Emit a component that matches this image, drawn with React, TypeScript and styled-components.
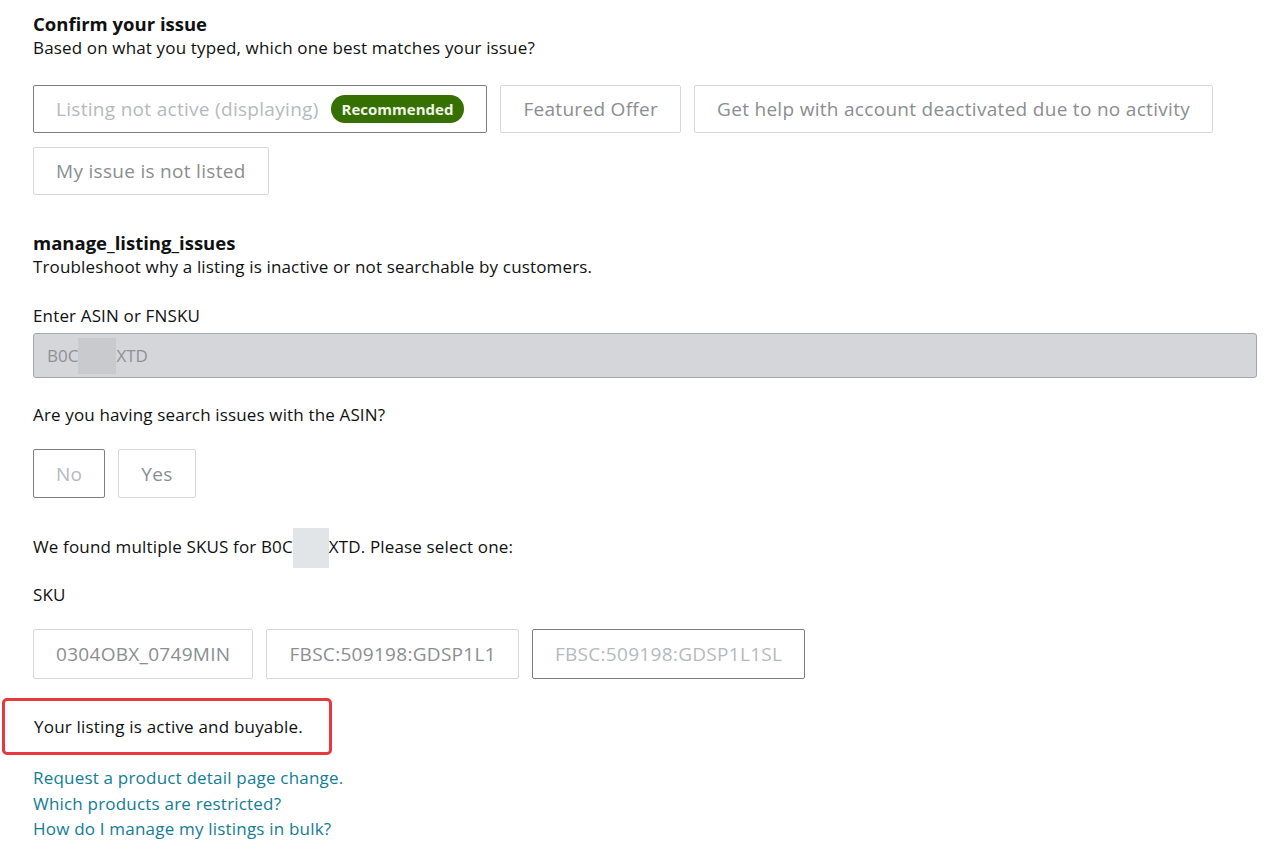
import React from 'react';
import styled, { createGlobalStyle } from 'styled-components';

const GlobalStyle = createGlobalStyle`
  html, body {
    margin: 0;
    padding: 0;
    background: #ffffff;
  }

  body {
    font-family: 'Open Sans', 'Liberation Sans', Arial, sans-serif;
    color: #0f1111;
  }
`;

const Page = styled.div`
  display: flex;
  flex-direction: column;
  padding: 12px 19px 20px 33px;
  width: 1276px;
  box-sizing: border-box;
`;

const Heading = styled.div<{ $top?: number }>`
  margin-top: ${(p) => p.$top ?? 0}px;
  font-size: 18.5px;
  font-weight: 700;
  line-height: 24px;
  color: #0f1111;
`;

const Text = styled.div<{ $top?: number }>`
  margin-top: ${(p) => p.$top ?? 0}px;
  font-size: 17px;
  letter-spacing: 0.15px;
  line-height: 24px;
  color: #0f1111;
`;

const ChoiceRow = styled.div<{ $top?: number }>`
  display: flex;
  flex-wrap: wrap;
  gap: 14px 13px;
  margin-top: ${(p) => p.$top ?? 0}px;
  max-width: 1190px;
`;

const Choice = styled.button<{ $selected?: boolean; $height?: number }>`
  display: inline-flex;
  align-items: center;
  gap: 12px;
  height: ${(p) => p.$height ?? 48}px;
  padding: 0 22px;
  box-sizing: border-box;
  background: #ffffff;
  border: 1px solid ${(p) => (p.$selected ? '#7b7f82' : '#d5d9d9')};
  border-radius: 2px;
  font-family: inherit;
  font-size: 19px;
  letter-spacing: 0.3px;
  color: ${(p) => (p.$selected ? '#b3babd' : '#8a8e92')};
  cursor: pointer;
`;

const Badge = styled.span`
  display: inline-flex;
  align-items: center;
  height: 28px;
  padding: 0 11px;
  border-radius: 14px;
  background: #357000;
  color: #f2f6ea;
  font-size: 15px;
  font-weight: 700;
  letter-spacing: 0;
`;

const InputBox = styled.div`
  display: flex;
  align-items: center;
  margin-top: 5px;
  height: 45px;
  padding: 0 13px;
  box-sizing: border-box;
  background: #d5d6d9;
  border: 1px solid #a3a6aa;
  border-radius: 3px;
  font-size: 17px;
  color: #8e9195;
`;

const Redact = styled.span<{ $bg: string; $w: number; $h: number }>`
  display: inline-block;
  width: ${(p) => p.$w}px;
  height: ${(p) => p.$h}px;
  margin: -8px 0;
  background: ${(p) => p.$bg};
  vertical-align: middle;
`;

const Notice = styled.div`
  display: flex;
  align-items: center;
  margin: 19px 0 0 -31px;
  width: 330px;
  height: 57px;
  padding-left: 29px;
  box-sizing: border-box;
  border: 3px solid #e8383d;
  border-radius: 5px;
  font-size: 17px;
  letter-spacing: 0.2px;
  color: #0f1111;
`;

const Links = styled.div`
  display: flex;
  flex-direction: column;
  margin-top: 10px;
`;

const HelpLink = styled.a`
  font-size: 17px;
  letter-spacing: 0.2px;
  line-height: 25.5px;
  color: #137c94;
  text-decoration: none;
  width: max-content;
`;

export default function App() {
  return (
    <>
      <GlobalStyle />
      <Page>
        <Heading>Confirm your issue</Heading>
        <Text>Based on what you typed, which one best matches your issue?</Text>

        <ChoiceRow $top={25}>
          <Choice $selected>
            Listing not active (displaying)
            <Badge>Recommended</Badge>
          </Choice>
          <Choice>Featured Offer</Choice>
          <Choice>Get help with account deactivated due to no activity</Choice>
          <Choice>My issue is not listed</Choice>
        </ChoiceRow>

        <Heading $top={36}>manage_listing_issues</Heading>
        <Text>Troubleshoot why a listing is inactive or not searchable by customers.</Text>

        <Text $top={25}>Enter ASIN or FNSKU</Text>
        <InputBox>
          B0C<Redact $bg="#c8cacd" $w={38} $h={36} />XTD
        </InputBox>

        <Text $top={25}>Are you having search issues with the ASIN?</Text>
        <ChoiceRow $top={22}>
          <Choice $selected $height={49}>No</Choice>
          <Choice $height={49}>Yes</Choice>
        </ChoiceRow>

        <Text $top={37}>
          We found multiple SKUS for B0C<Redact $bg="#e2e5e7" $w={36} $h={40} />XTD. Please select one:
        </Text>

        <Text $top={23}>SKU</Text>
        <ChoiceRow $top={22}>
          <Choice $height={50}>0304OBX_0749MIN</Choice>
          <Choice $height={50}>FBSC:509198:GDSP1L1</Choice>
          <Choice $selected $height={50}>FBSC:509198:GDSP1L1SL</Choice>
        </ChoiceRow>

        <Notice>Your listing is active and buyable.</Notice>

        <Links>
          <HelpLink href="#">Request a product detail page change.</HelpLink>
          <HelpLink href="#">Which products are restricted?</HelpLink>
          <HelpLink href="#">How do I manage my listings in bulk?</HelpLink>
        </Links>
      </Page>
    </>
  );
}
